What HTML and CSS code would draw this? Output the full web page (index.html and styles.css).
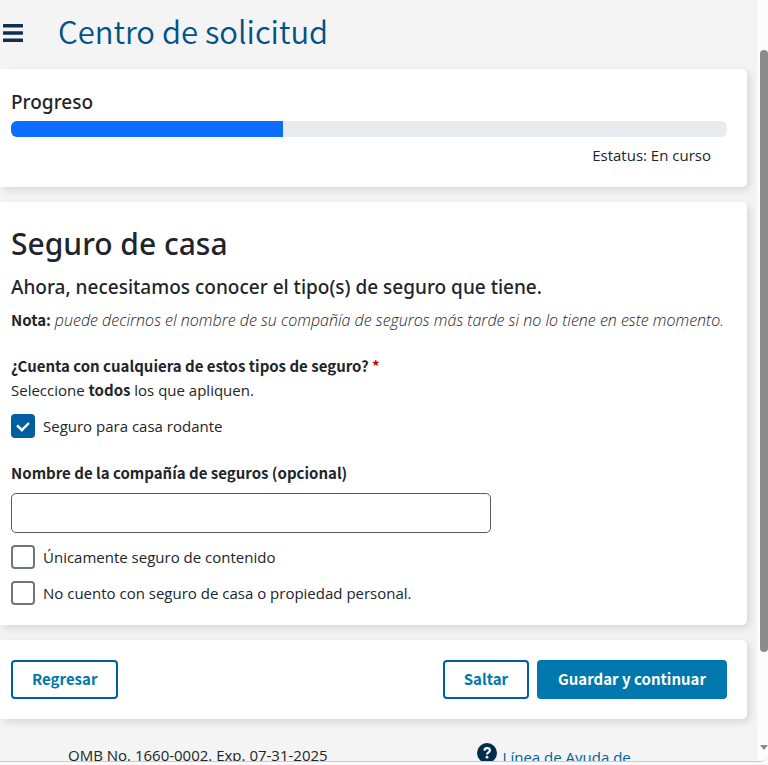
FILE: index.html
```html
<!DOCTYPE html>
<html lang="es">
<head>
  <meta charset="UTF-8">
  <meta name="viewport" content="width=device-width, initial-scale=1.0">
  <title>Centro de solicitud</title>
  <link rel="stylesheet" href="styles.css">
</head>
<body>
  <div class="window">
    <div class="page">
      <header class="topbar">
        <button type="button" class="menu-toggle" aria-label="Menú">
          <svg width="20" height="18" viewBox="0 0 20 18" fill="#112e51">
            <rect width="20" height="3.4" rx="0.5"/>
            <rect y="7.3" width="20" height="3.4" rx="0.5"/>
            <rect y="14.6" width="20" height="3.4" rx="0.5"/>
          </svg>
        </button>
        <h1>Centro de solicitud</h1>
      </header>

      <main>
        <section class="card progress-card">
          <h2 class="subtitle">Progreso</h2>
          <div class="progress" role="progressbar" aria-valuenow="38" aria-valuemin="0" aria-valuemax="100" aria-label="Progreso">
            <div class="progress-bar" style="width: 38%"></div>
          </div>
          <p class="status">Estatus: En curso</p>
        </section>

        <form id="insurance" class="card form-card">
          <h2 class="title">Seguro de casa</h2>
          <h3 class="subtitle">Ahora, necesitamos conocer el tipo(s) de seguro que tiene.</h3>
          <p class="note"><strong>Nota:</strong> <em>puede decirnos el nombre de su compañía de seguros más tarde si no lo tiene en este momento.</em></p>

          <fieldset>
            <legend>¿Cuenta con cualquiera de estos tipos de seguro? <span class="required">*</span></legend>
            <p class="hint">Seleccione <strong>todos</strong> los que apliquen.</p>
            <div class="check">
              <input type="checkbox" id="mobile-home" checked>
              <label for="mobile-home">Seguro para casa rodante</label>
            </div>
            <div class="field">
              <label for="company">Nombre de la compañía de seguros (opcional)</label>
              <input type="text" id="company">
            </div>
            <div class="check">
              <input type="checkbox" id="contents">
              <label for="contents">Únicamente seguro de contenido</label>
            </div>
            <div class="check">
              <input type="checkbox" id="no-insurance">
              <label for="no-insurance">No cuento con seguro de casa o propiedad personal.</label>
            </div>
          </fieldset>
        </form>

        <section class="card actions">
          <button type="button" class="btn btn-outline">Regresar</button>
          <div class="actions-right">
            <button type="button" class="btn btn-outline">Saltar</button>
            <button type="submit" form="insurance" class="btn btn-primary">Guardar y continuar</button>
          </div>
        </section>
      </main>

      <footer>
        <p>OMB No. 1660-0002. Exp. 07-31-2025</p>
        <div class="help">
          <svg width="20" height="20" viewBox="0 0 20 20">
            <circle cx="10" cy="10" r="10" fill="#002d4b"/>
            <path d="M7.3 7.6C7.5 5.9 8.6 5.1 10.1 5.1c1.6 0 2.8.9 2.8 2.3 0 2-2.8 2.1-2.8 4" fill="none" stroke="#fff" stroke-width="2.1"/>
            <circle cx="10" cy="14.2" r="1.4" fill="#fff"/>
          </svg>
          <a href="#">Línea de Ayuda de</a>
        </div>
      </footer>
    </div>

    <div class="scrollbar" aria-hidden="true">
      <div class="thumb"></div>
      <div class="arrow"></div>
    </div>
  </div>
</body>
</html>
```
FILE: styles.css
```css
:root {
  --text: #212529;
  --blue: #005ea2;
  --blue-light: #0078ae;
  --gray: #71767a;
  --font: "Open Sans", "Noto Sans", sans-serif;
  --font-heading: "Noto Sans", sans-serif;
  --font-alt: "Noto Sans CJK JP", sans-serif;
}
* {
  box-sizing: border-box;
}
body {
  margin: 0;
  background: #fafafa;
  font: 400 15px/24px var(--font);
  color: var(--text);
}
h1, h2, h3, p {
  margin: 0;
}
strong, legend {
  font-family: var(--font-alt);
  font-weight: 700;
}
.window {
  display: flex;
  height: calc(100vh - 3px);
  overflow: hidden;
  border-bottom: 1px solid #ccc;
  border-bottom-right-radius: 8px;
}
.page {
  flex: 1;
  min-width: 0;
  overflow: hidden;
  background: #f4f4f4;
}
.topbar {
  display: flex;
  align-items: center;
  gap: 35px;
  height: 69px;
  padding: 0 3px 3px;
}
.topbar h1 {
  padding-bottom: 4px;
  font: 350 31px/40px var(--font-alt);
  color: #005288;
}
.menu-toggle {
  display: flex;
  padding: 0;
  border: none;
  background: none;
  cursor: pointer;
}
.card {
  margin: 0 10px 15px 0;
  padding: 20px 20px 20px 11px;
  background: #fff;
  border-radius: 0 5px 5px 0;
  box-shadow: 3px 3px 8px rgba(0, 0, 0, 0.12);
}
.subtitle {
  font: 500 19px/26px var(--font-heading);
}
.title {
  font: 500 30px/44px var(--font-heading);
}
.progress-card .subtitle {
  margin-bottom: 6px;
}
.progress {
  height: 16px;
  overflow: hidden;
  background: #e9ecef;
  border-radius: 6px;
}
.progress-bar {
  height: 100%;
  background: #0d6efd;
}
.status {
  padding: 6px 16px 0 0;
  text-align: right;
}
.form-card .subtitle {
  margin: 8px 0;
}
.note em {
  font-size: 16px;
  font-weight: 300;
}
fieldset {
  margin: 22px 0 0;
  padding: 0;
  border: none;
}
legend {
  padding: 0;
}
.required {
  color: #b50909;
}
.check {
  display: flex;
  align-items: center;
  gap: 8px;
  margin-top: 12px;
}
.check input {
  appearance: none;
  flex: none;
  width: 24px;
  height: 24px;
  margin: 0;
  border: 2px solid var(--gray);
  border-radius: 4px;
  background: #fff;
}
.check input:checked {
  display: grid;
  place-items: center;
  border-color: var(--blue);
  background: var(--blue);
}
.check input:checked::before {
  content: "";
  width: 11px;
  height: 7px;
  margin-bottom: 3px;
  border: solid #fff;
  border-width: 0 0 3px 3px;
  transform: rotate(-45deg) scale(0.8);
}
.field {
  margin-top: 23px;
}
.field label {
  display: block;
  margin-bottom: 8px;
  font-family: var(--font-alt);
  font-weight: 700;
}
.field input {
  display: block;
  width: 100%;
  max-width: 480px;
  height: 40px;
  padding: 0 8px;
  border: 1px solid #565c65;
  border-radius: 5px;
  font: inherit;
}
.actions {
  display: flex;
  justify-content: space-between;
}
.actions-right {
  display: flex;
  gap: 8px;
}
.btn {
  padding: 5px 19px 7px;
  border: 2px solid var(--blue);
  border-radius: 4px;
  background: #fff;
  font: 700 15px/23px var(--font-alt);
  color: var(--blue-light);
  cursor: pointer;
}
.btn-primary {
  border-color: var(--blue-light);
  background: var(--blue-light);
  color: #fff;
}
footer {
  display: grid;
  grid-template-columns: 3fr 2fr;
  padding: 9px 8px 0 68px;
}
.help {
  display: flex;
  gap: 6px;
}
.help a {
  padding-top: 2px;
  color: var(--blue);
  text-decoration: none;
}
.scrollbar {
  display: flex;
  flex-direction: column;
  width: 11px;
  padding: 50px 0 11px 3px;
  background: #fcfcfc;
}
.thumb {
  height: 86%;
  background: #8b8b8b;
  border-radius: 4px;
}
.arrow {
  align-self: center;
  margin-top: auto;
  border: 4px solid transparent;
  border-top: 5px solid #8b8b8b;
  border-bottom: none;
}
```
